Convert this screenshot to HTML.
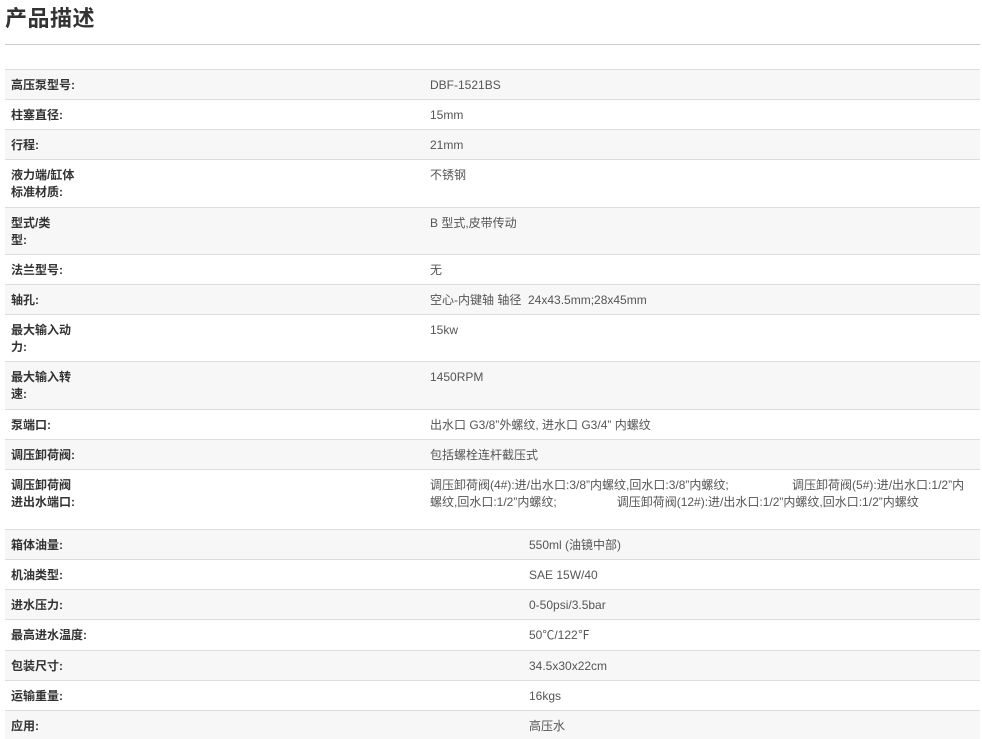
<!DOCTYPE html>
<html><head><meta charset="utf-8"><style>
body{margin:0;background:#fff;font-family:"Liberation Sans","Noto Sans CJK SC",sans-serif;}
h1{position:absolute;left:5px;top:3px;margin:0;font-size:22px;font-weight:bold;color:#333;line-height:32px;letter-spacing:0.5px;}
.hr{position:absolute;left:5px;width:975px;top:44px;height:1px;background:#ccc;}
.r{position:absolute;left:5px;width:975px;border-top:1px solid #ddd;box-sizing:border-box;font-size:12px;line-height:17px;}
.g{background:#f7f7f7;}
.l{position:absolute;left:6px;top:7px;font-weight:bold;color:#333;}
.v{position:absolute;top:7px;color:#555;white-space:pre;}
</style></head><body>
<h1>产品描述</h1>
<div class="hr"></div>
<div class="r g" style="top:69px;height:30px"><div class="l">高压泵型号:</div><div class="v" style="left:425px">DBF-1521BS</div></div>
<div class="r" style="top:99px;height:30px"><div class="l">柱塞直径:</div><div class="v" style="left:425px">15mm</div></div>
<div class="r g" style="top:129px;height:30px"><div class="l">行程:</div><div class="v" style="left:425px">21mm</div></div>
<div class="r" style="top:159px;height:48px"><div class="l">液力端/缸体<br>标准材质:</div><div class="v" style="left:425px">不锈钢</div></div>
<div class="r g" style="top:207px;height:47px"><div class="l">型式/类<br>型:</div><div class="v" style="left:425px">B 型式,皮带传动</div></div>
<div class="r" style="top:254px;height:30px"><div class="l">法兰型号:</div><div class="v" style="left:425px">无</div></div>
<div class="r g" style="top:284px;height:30px"><div class="l">轴孔:</div><div class="v" style="left:425px">空心-内键轴 轴径  24x43.5mm;28x45mm</div></div>
<div class="r" style="top:314px;height:47px"><div class="l">最大输入动<br>力:</div><div class="v" style="left:425px">15kw</div></div>
<div class="r g" style="top:361px;height:48px"><div class="l">最大输入转<br>速:</div><div class="v" style="left:425px">1450RPM</div></div>
<div class="r" style="top:409px;height:30px"><div class="l">泵端口:</div><div class="v" style="left:425px">出水口 G3/8”外螺纹, 进水口 G3/4” 内螺纹</div></div>
<div class="r g" style="top:439px;height:30px"><div class="l">调压卸荷阀:</div><div class="v" style="left:425px">包括螺栓连杆截压式</div></div>
<div class="r" style="top:469px;height:60px"><div class="l">调压卸荷阀<br>进出水端口:</div><div class="v" style="left:425px">调压卸荷阀(4#):进/出水口:3/8”内螺纹,回水口:3/8”内螺纹;                   调压卸荷阀(5#):进/出水口:1/2”内
螺纹,回水口:1/2”内螺纹;                  调压卸荷阀(12#):进/出水口:1/2”内螺纹,回水口:1/2”内螺纹</div></div>
<div class="r g" style="top:529px;height:30px"><div class="l">箱体油量:</div><div class="v" style="left:524px">550ml (油镜中部)</div></div>
<div class="r" style="top:559px;height:30px"><div class="l">机油类型:</div><div class="v" style="left:524px">SAE 15W/40</div></div>
<div class="r g" style="top:589px;height:30px"><div class="l">进水压力:</div><div class="v" style="left:524px">0-50psi/3.5bar</div></div>
<div class="r" style="top:619px;height:31px"><div class="l">最高进水温度:</div><div class="v" style="left:524px">50℃/122℉</div></div>
<div class="r g" style="top:650px;height:30px"><div class="l">包装尺寸:</div><div class="v" style="left:524px">34.5x30x22cm</div></div>
<div class="r" style="top:680px;height:30px"><div class="l">运输重量:</div><div class="v" style="left:524px">16kgs</div></div>
<div class="r g" style="top:710px;height:29px"><div class="l">应用:</div><div class="v" style="left:524px">高压水</div></div>
</body></html>
